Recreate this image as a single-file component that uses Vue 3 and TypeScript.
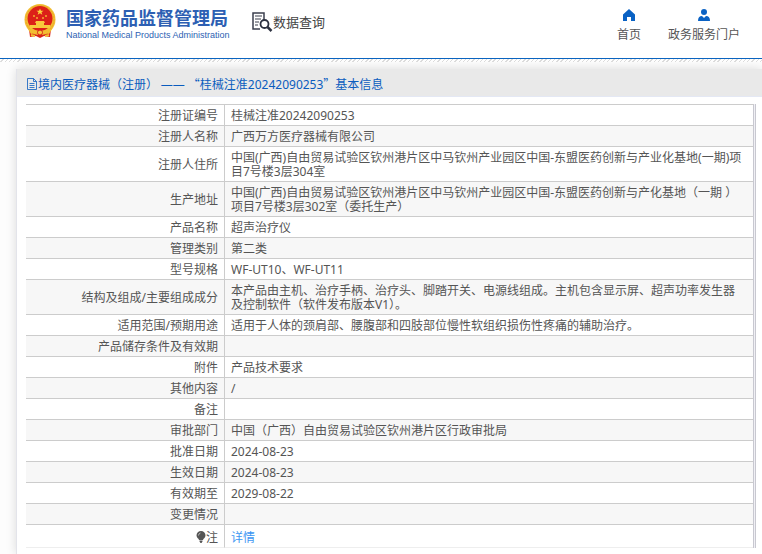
<script setup lang="ts">
interface Row {
  label: string
  value: string
}

const rows: Row[] = [
  { label: '注册证编号', value: '桂械注准20242090253' },
  { label: '注册人名称', value: '广西万方医疗器械有限公司' },
  { label: '注册人住所', value: '中国(广西)自由贸易试验区钦州港片区中马钦州产业园区中国-东盟医药创新与产业化基地(一期)项目7号楼3层304室' },
  { label: '生产地址', value: '中国(广西)自由贸易试验区钦州港片区中马钦州产业园区中国-东盟医药创新与产化基地（一期 ）项目7号楼3层302室（委托生产）' },
  { label: '产品名称', value: '超声治疗仪' },
  { label: '管理类别', value: '第二类' },
  { label: '型号规格', value: 'WF-UT10、WF-UT11' },
  { label: '结构及组成/主要组成成分', value: '本产品由主机、治疗手柄、治疗头、脚踏开关、电源线组成。主机包含显示屏、超声功率发生器及控制软件（软件发布版本V1）。' },
  { label: '适用范围/预期用途', value: '适用于人体的颈肩部、腰腹部和四肢部位慢性软组织损伤性疼痛的辅助治疗。' },
  { label: '产品储存条件及有效期', value: '' },
  { label: '附件', value: '产品技术要求' },
  { label: '其他内容', value: '/' },
  { label: '备注', value: '' },
  { label: '审批部门', value: '中国（广西）自由贸易试验区钦州港片区行政审批局' },
  { label: '批准日期', value: '2024-08-23' },
  { label: '生效日期', value: '2024-08-23' },
  { label: '有效期至', value: '2029-08-22' },
  { label: '变更情况', value: '' },
]
</script>

<template>
  <div class="page">
    <header class="top">
      <a class="brand" href="#">
        <svg class="emblem" viewBox="0 0 32 34" aria-hidden="true">
          <path d="M5 25h22l-1 8-6-1-4 2-4-2-6 1z" fill="#d9231c" />
          <circle cx="16" cy="15.500" r="15.500" fill="#f3bd32" />
          <circle cx="16" cy="15.500" r="14" fill="none" stroke="#e9a628" stroke-dasharray="2 1" />
          <circle cx="16" cy="14.500" r="12.500" fill="#dc2018" />
          <path d="M16 4.500l1 2.300h2.500l-2 1.500.8 2.500-2.300-1.500-2.300 1.500.8-2.500-2-1.500H15z" fill="#fbd23c" />
          <path d="M9 11h2v2H9zM12 13h2v2h-2zM18 13h2v2h-2zM21 11h2v2h-2z" fill="#f08a2a" />
          <path d="M11 19l1-2h8l1 2zM12 19h8v2h6v3H6v-3h6z" fill="#f9c93b" />
          <path d="M4 25q12 4 24 0l-3 5-5-1-4 2-4-2-5 1z" fill="#f3bd32" />
          <circle cx="16" cy="28.500" r="2.500" fill="#f7c93c" stroke="#d9231c" />
          <path d="M7 31l4 1M25 31l-4 1" stroke="#f3bd32" stroke-width="2" />
        </svg>
        <span class="names">
          <span class="cn">国家药品监督管理局</span>
          <span class="en">National Medical Products Administration</span>
        </span>
      </a>
      <div class="query">
        <svg viewBox="0 0 21 20" aria-hidden="true">
          <path d="M8 17H1V1h11v7" fill="none" stroke="#3b3f4d" stroke-width="1.500" />
          <path d="M3 4h7M3 7h6M3 10h4M3 13h3" stroke="#3b3f4d" />
          <circle cx="12.500" cy="12" r="4" fill="#fff" stroke="#2c3140" stroke-width="1.800" />
          <path d="M15.500 15l4 4" stroke="#2c3140" stroke-width="2.500" />
        </svg>
        <span>数据查询</span>
      </div>
      <nav class="nav">
        <a href="#">
          <svg viewBox="0 0 14 14" aria-hidden="true"><path d="M7 1l6 5.500V13H9V9H5v4H1V6.500z" fill="#0a62c4" /></svg>
          <span>首页</span>
        </a>
        <a href="#">
          <svg viewBox="0 0 14 14" aria-hidden="true">
            <circle cx="7" cy="4" r="3" fill="#0a62c4" />
            <path d="M1 13q0-5 4-5l2 2 2-2q4 0 4 5z" fill="#0a62c4" />
          </svg>
          <span>政务服务门户</span>
        </a>
      </nav>
    </header>
    <div class="hatch"></div>

    <main class="panel">
      <h1 class="title">
        <svg viewBox="0 0 12 12" aria-hidden="true">
          <path d="M1.500.5h6l3 3v8h-9zM7.500.5v3h3M3.500 5.500h5M3.500 7.500h5M3.500 9.500h5" fill="none" stroke="#0a5cbe" stroke-width=".8" />
        </svg>
        <span>境内医疗器械（注册） <span class="latin">—— </span>“桂械注准<span class="latin">20242090253</span>”基本信息</span>
      </h1>
      <div class="sheet">
        <table>
          <tbody>
            <tr v-for="row in rows" :key="row.label">
              <th scope="row">{{ row.label }}</th>
              <td>{{ row.value }}</td>
            </tr>
            <tr class="note">
              <th scope="row">
                <svg viewBox="0 0 10 12" aria-hidden="true">
                  <path d="M5 0a4.500 4.500 0 0 1 4.500 4.500C9.500 7 7 7.500 7 9H3C3 7.500.5 7 .5 4.500A4.500 4.500 0 0 1 5 0zM3.500 9.500h3v1L5.500 12h-1l-1-1.500z" fill="#555" />
                  <path d="M2.500 4.500Q2.500 2.500 4.500 2" fill="none" stroke="#ccc" stroke-width=".8" />
                </svg>注
              </th>
              <td><a href="#">详情</a></td>
            </tr>
          </tbody>
        </table>
      </div>
    </main>
  </div>
</template>

<style>
body {
  background: #fdfdfd;
}
</style>

<style scoped>
.page {
  display: flex;
  flex-direction: column;
  box-sizing: border-box;
  min-height: 100vh;
  overflow: hidden;
  font: 12px/14px "Noto Sans", "Noto Sans CJK SC", sans-serif;
  color: #555;
}
a {
  text-decoration: none;
  color: inherit;
}
.top {
  display: flex;
  align-items: flex-start;
  box-sizing: border-box;
  height: 59px;
  padding: 4px 22px 0 24px;
  background: #fff;
  border-bottom: 1px solid #0a64c0;
}
.brand {
  display: flex;
  gap: 10px;
}
.emblem {
  width: 32px;
  height: 34px;
}
.names {
  display: flex;
  flex-direction: column;
  width: 160px;
  padding-top: 2px;
  white-space: nowrap;
  color: #2d5fb3;
}
.cn {
  font: bold 18px/22px "Noto Sans CJK SC", sans-serif;
}
.en {
  font: 9px/14px "Liberation Sans", sans-serif;
}
.query {
  display: flex;
  align-items: center;
  margin: 8px 0 0 26px;
  font: 13px/20px "Noto Sans CJK SC", sans-serif;
  color: #444;
}
.query svg {
  width: 21px;
  height: 20px;
}
.nav {
  display: flex;
  gap: 27px;
  margin-left: auto;
  padding-top: 4px;
}
.nav a {
  display: flex;
  flex-direction: column;
  align-items: center;
  gap: 6px;
}
.nav svg {
  width: 14px;
  height: 14px;
}
.hatch {
  height: 3px;
  background: repeating-linear-gradient(135deg, #fff 0 2px, #ddd 2px 3px);
}
.panel {
  flex: 1;
  margin: 7px 0 0 16px;
  padding-bottom: 6px;
  background: #fff;
  border-left: 1px solid #e3e4ea;
  box-shadow: 0 0 10px rgba(0, 0, 0, 0.14);
}
.title {
  display: flex;
  align-items: center;
  box-sizing: border-box;
  height: 28px;
  margin: 0;
  padding: 3px 9px 0;
  background: #e9e9e9;
  border-bottom: 1px solid #e4e8f4;
  font: 12px/14px "Noto Sans CJK SC", sans-serif;
  color: #0a5cbe;
}
.title svg {
  width: 12px;
  height: 12px;
}
.latin {
  font-family: "Noto Sans", sans-serif;
}
.sheet {
  margin: 7px 6px 0 9px;
  padding-right: 1px;
  border-right: 1px solid #c8c8d0;
  background: #f0f0f5;
}
table {
  width: 100%;
  border-collapse: separate;
  border-spacing: 0;
  border-top: 1px solid #ccc;
  border-right: 1px solid #c8c8d0;
  background: #fff;
}
th,
td {
  padding: 4px 6px 2px;
  border-bottom: 1px solid #ccc;
  font-weight: normal;
  vertical-align: middle;
}
th {
  width: 186px;
  border-right: 1px solid #ccc;
  text-align: right;
}
td {
  padding-right: 9px;
  text-align: left;
}
tr {
  height: 21px;
}
tr:nth-child(even) {
  background: #f7f7f7;
}
.note {
  height: 23px;
}
.note th,
.note td {
  padding-top: 6px;
  border-bottom-color: #eee;
}
.note svg {
  width: 10px;
  height: 12px;
  vertical-align: -1px;
}
.note a {
  color: #3d96f2;
}
</style>
